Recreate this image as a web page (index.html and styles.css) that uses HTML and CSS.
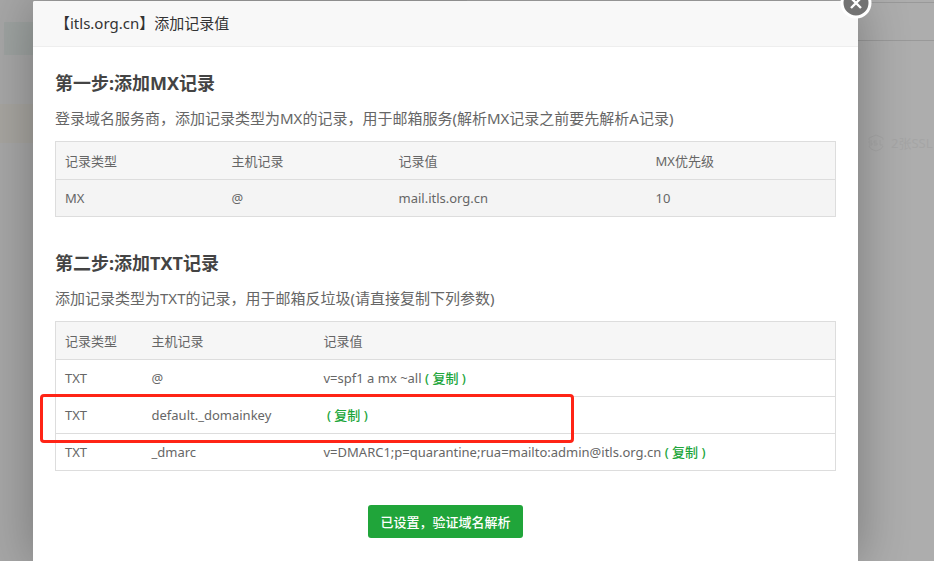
FILE: index.html
```html
<!DOCTYPE html>
<html lang="zh-CN">
<head>
    <meta charset="UTF-8">
    <meta name="viewport" content="width=device-width, initial-scale=1.0">
    <title>添加记录值</title>
    <link rel="stylesheet" href="styles.css">
</head>
<body>

    <!-- Dimmed page behind the dialog -->
    <div class="backdrop" aria-hidden="true">
        <div class="backdrop-tab"></div>
        <div class="backdrop-tip"></div>
        <div class="backdrop-bar"></div>
        <div class="backdrop-ssl">
            <svg width="18" height="18" viewBox="0 0 18 18" fill="none" stroke="currentColor">
                <path d="M2 6V4l7-3 7 3v2M2 12c1 3 4 4 7 5 3-1 6-2 7-5"/>
                <path d="M5 7H2v2h3v2H2M10 7H7v2h3v2H7M13 6v5h3"/>
            </svg>
            2张SSL
        </div>
    </div>

    <div class="dialog" role="dialog" aria-labelledby="dialog-title">
        <div class="dialog-title" id="dialog-title">【itls.org.cn】添加记录值</div>
        <button class="dialog-close" type="button" aria-label="关闭">
            <svg width="32" height="32" viewBox="0 0 32 32">
                <circle cx="16" cy="16" r="14" fill="#737373" stroke="#fff" stroke-width="3"/>
                <path d="M11 11l10 10M21 11L11 21" stroke="#fff" stroke-width="2.4"/>
            </svg>
        </button>

        <div class="dialog-body">
            <!-- MX record -->
            <section class="step">
                <h2>第一步:添加MX记录</h2>
                <p>登录域名服务商，添加记录类型为MX的记录，用于邮箱服务(解析MX记录之前要先解析A记录)</p>
                <table class="records mx-records">
                    <thead>
                        <tr><th>记录类型</th><th>主机记录</th><th>记录值</th><th>MX优先级</th></tr>
                    </thead>
                    <tbody>
                        <tr><td>MX</td><td>@</td><td>mail.itls.org.cn</td><td>10</td></tr>
                    </tbody>
                </table>
            </section>

            <!-- TXT records -->
            <section class="step">
                <h2>第二步:添加TXT记录</h2>
                <p>添加记录类型为TXT的记录，用于邮箱反垃圾(请直接复制下列参数)</p>
                <div class="marked">
                    <table class="records txt-records">
                        <thead>
                            <tr><th>记录类型</th><th>主机记录</th><th>记录值</th></tr>
                        </thead>
                        <tbody>
                            <tr><td>TXT</td><td>@</td><td>v=spf1 a mx ~all <a href="#">( 复制 )</a></td></tr>
                            <tr><td>TXT</td><td>default._domainkey</td><td>&nbsp;<a href="#">( 复制 )</a></td></tr>
                            <tr><td>TXT</td><td>_dmarc</td><td>v=DMARC1;p=quarantine;rua=mailto:admin@itls.org.cn <a href="#">( 复制 )</a></td></tr>
                        </tbody>
                    </table>
                    <div class="mark"></div>
                </div>
            </section>

            <button class="verify" type="button">已设置，验证域名解析</button>
        </div>
    </div>

</body>
</html>
```

FILE: styles.css
```css
* {
    box-sizing: border-box;
}

body {
    margin: 0;
    min-height: 100vh;
    overflow: hidden;
    background-color: #adadad;
    font-family: "Noto Sans", "Noto Sans CJK SC", sans-serif;
    font-size: 13px;
    color: #666;
}

/* Dimmed page */
.backdrop {
    position: absolute;
    inset: 0;
    overflow: hidden;
    background: linear-gradient(90deg, #a6a6a6 50%, #adadad 50%);
}

.backdrop-tab {
    width: 60px;
    height: 33px;
    margin: 22px 0 49px 4px;
    background-color: #9da2a0;
}

.backdrop-tip {
    width: 60px;
    height: 39px;
    background-color: #a6a49f;
}

.backdrop-bar {
    position: absolute;
    top: 2px;
    left: 0;
    right: 0;
    height: 39px;
    margin-left: 50%;
    border: solid #999;
    border-width: 1px 0;
}

.backdrop-ssl {
    position: absolute;
    top: 134px;
    right: 0;
    display: flex;
    align-items: center;
    gap: 6px;
    width: 67px;
    line-height: 18px;
    white-space: nowrap;
    color: #a5a5a5;
}

/* Dialog */
.dialog {
    position: relative;
    min-height: calc(100vh - 1px);
    margin: 1px 76px 0 33px;
    border-radius: 2px 2px 0 0;
    background-color: #fff;
    box-shadow: 1px 1px 50px rgba(0, 0, 0, 0.3);
}

.dialog-title {
    height: 46px;
    padding: 0 22px;
    border-bottom: 1px solid #eee;
    border-radius: 2px 2px 0 0;
    background-color: #f8f8f8;
    font-size: 15px;
    line-height: 45px;
    color: #333;
}

.dialog-close {
    position: absolute;
    top: -14px;
    right: -14px;
    padding: 0;
    border: 0;
    background: none;
    cursor: pointer;
}

.dialog-close svg {
    display: block;
}

.dialog-body {
    padding: 24px 22px;
}

.step {
    margin-bottom: 34px;
}

.step h2 {
    margin: 0 0 11px;
    font-size: 18px;
    line-height: 24px;
    color: #444;
}

.step p {
    margin: 0 0 11px;
    font-size: 15px;
    line-height: 24px;
}

/* Record tables */
.records {
    width: 100%;
    table-layout: fixed;
    border-collapse: collapse;
    border: 1px solid #ddd;
}

.records th,
.records td {
    height: 37px;
    padding: 0 9px;
    border-bottom: 1px solid #ddd;
    font-weight: normal;
    line-height: 20px;
    text-align: left;
}

.records th {
    height: 38px;
    background-color: #f6f6f6;
}

.mx-records td {
    background-color: #f4f4f4;
}

.mx-records th:nth-child(1),
.mx-records th:nth-child(2) {
    width: 167px;
}

.mx-records th:nth-child(3) {
    width: 257px;
}

.txt-records th:nth-child(1) {
    width: 87px;
}

.txt-records th:nth-child(2) {
    width: 172px;
}

.records a {
    font-weight: 500;
    color: #20a53a;
    text-decoration: none;
}

/* Red frame around the domainkey row */
.marked {
    position: relative;
}

.mark {
    position: absolute;
    top: 73px;
    left: -15px;
    width: 534px;
    height: 49px;
    border: 3px solid #ff2416;
    border-radius: 4px;
    pointer-events: none;
}

.verify {
    display: block;
    height: 33px;
    margin: 0 auto;
    padding: 0 12px;
    border: 0;
    border-radius: 3px;
    background-color: #20a53a;
    font-family: inherit;
    font-size: 13px;
    font-weight: 500;
    color: #fff;
    cursor: pointer;
}
```
